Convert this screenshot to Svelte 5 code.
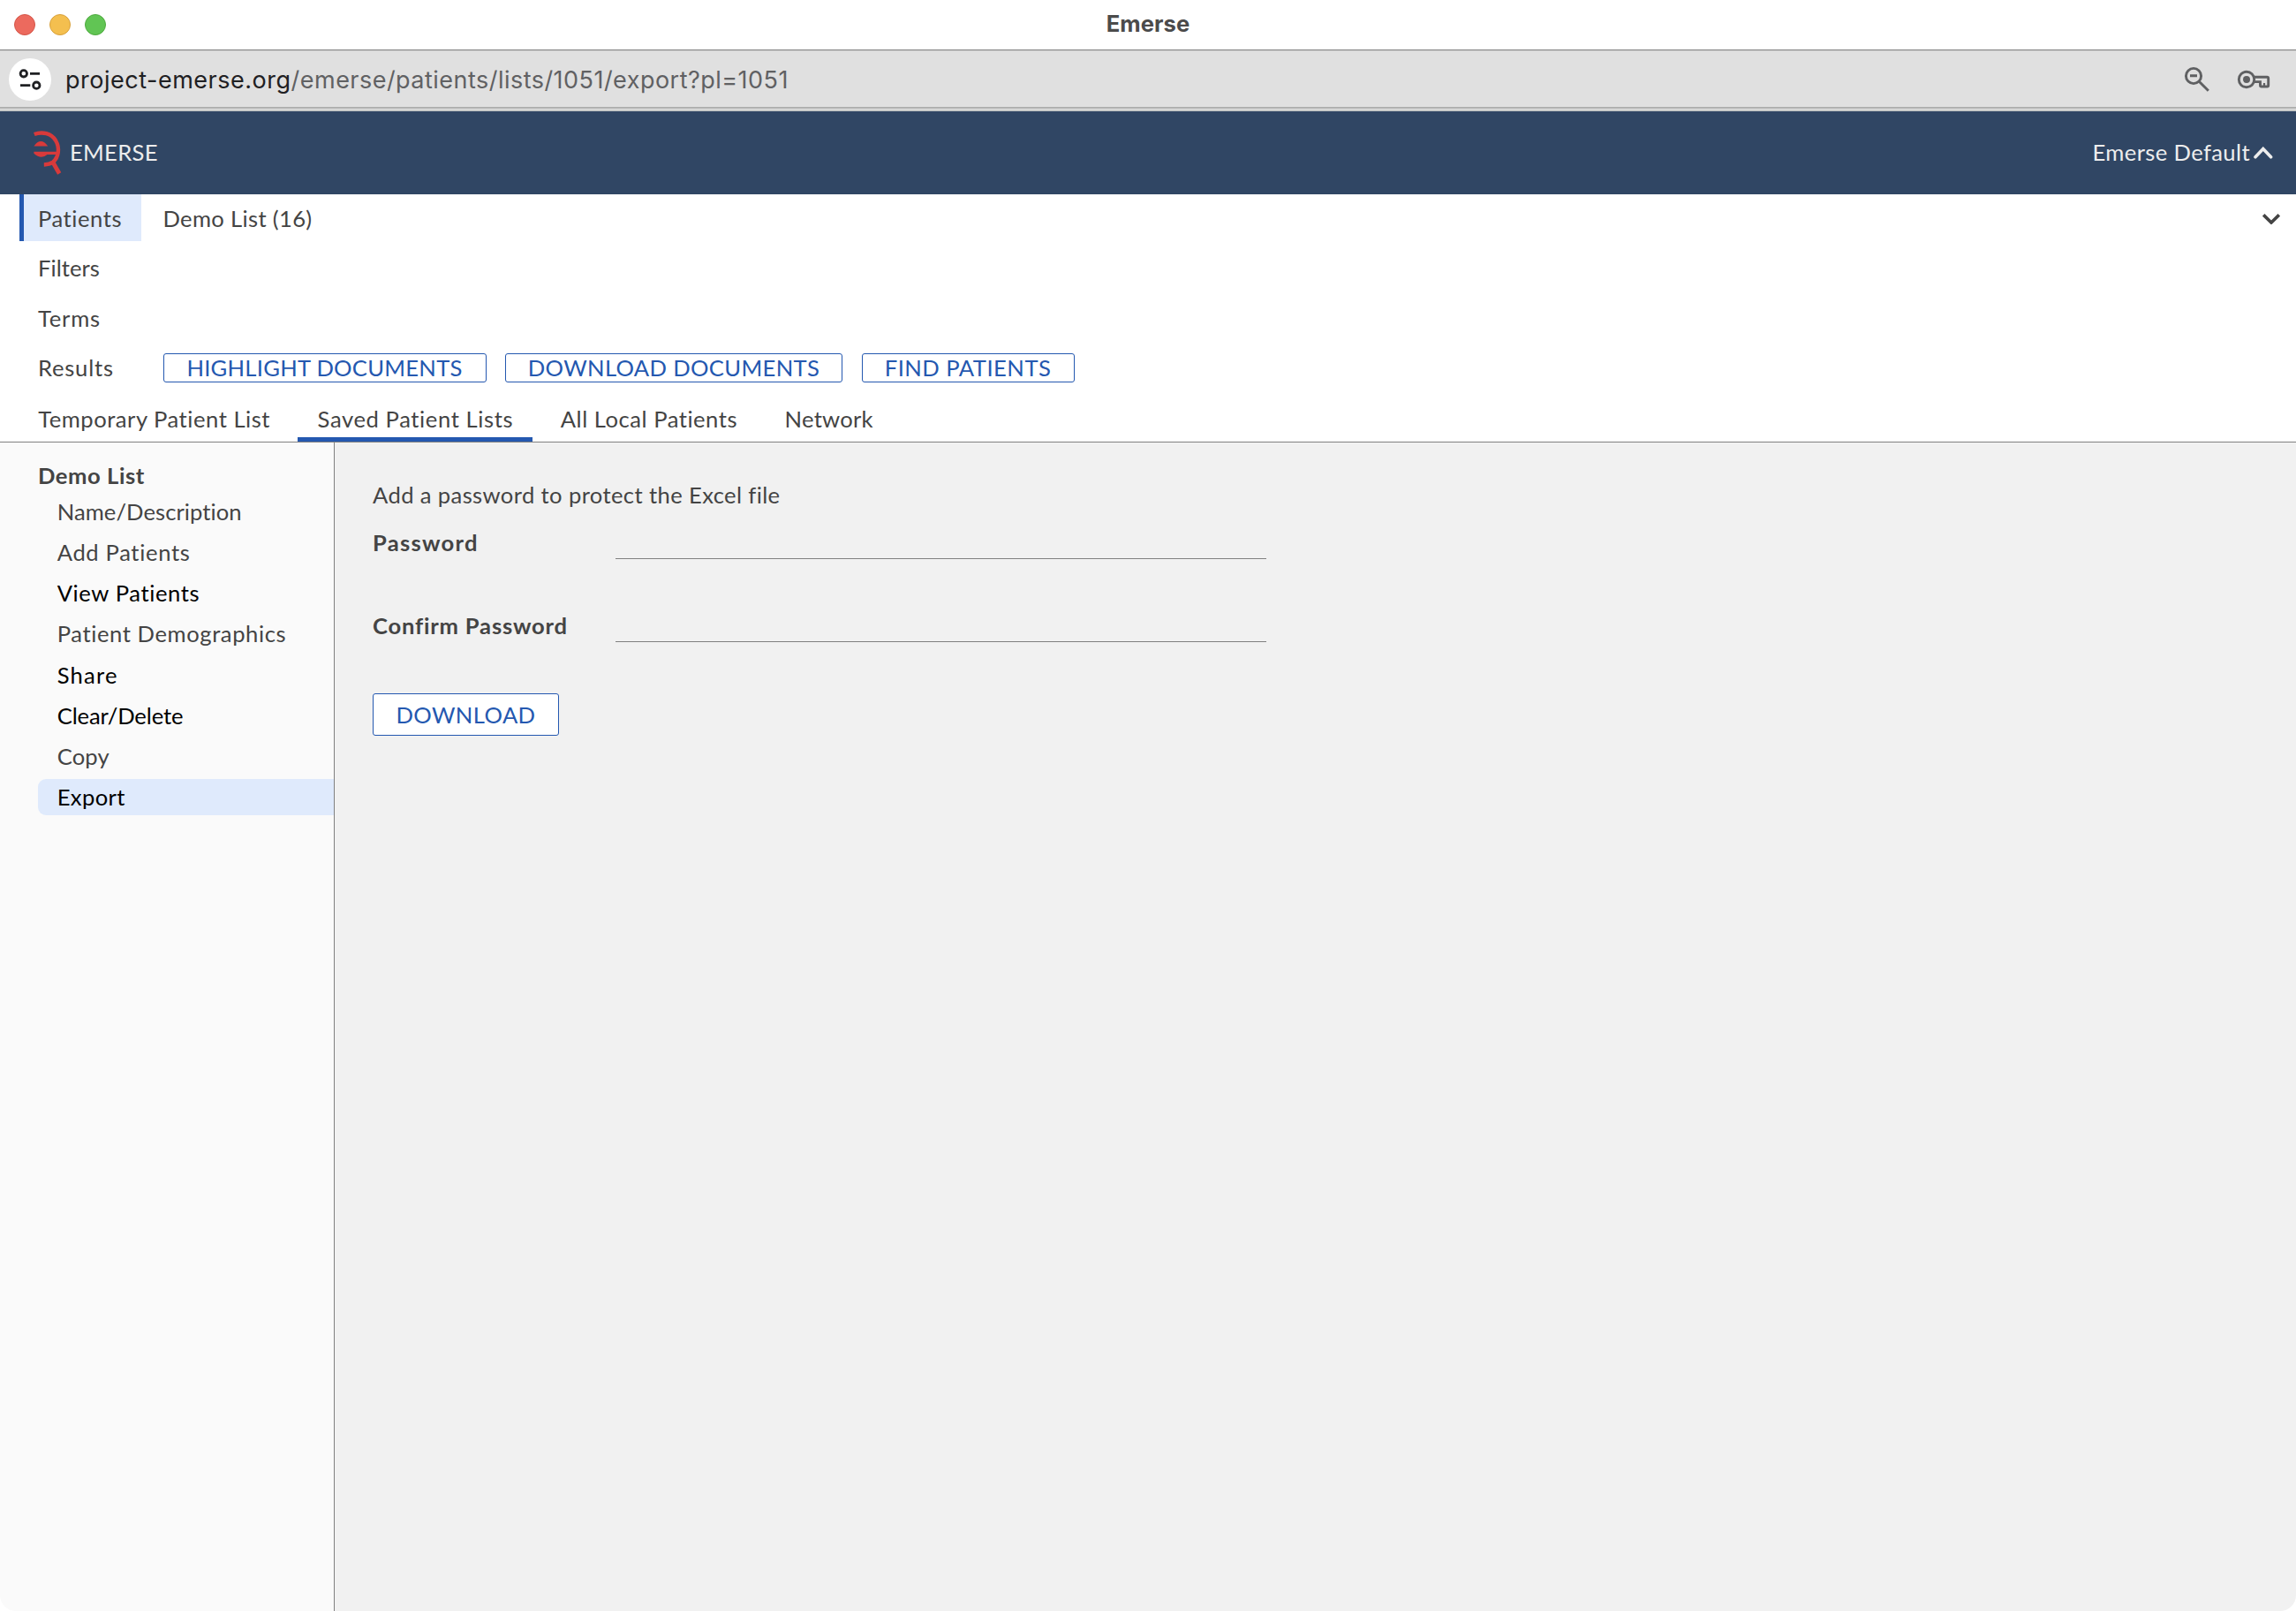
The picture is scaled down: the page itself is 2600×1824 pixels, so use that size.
<script lang="ts">
	type Label = { text: string; ls: number };

	const url = { host: 'project-emerse.org', path: '/emerse/patients/lists/1051/export?pl=1051' };

	// ls = letter-spacing in px
	const actions: (Label & { width: number })[] = [
		{ text: 'HIGHLIGHT DOCUMENTS', ls: 0.26, width: 366 },
		{ text: 'DOWNLOAD DOCUMENTS', ls: 0.34, width: 382 },
		{ text: 'FIND PATIENTS', ls: 0.48, width: 241 },
	];

	const tabs: Label[] = [
		{ text: 'Temporary Patient List', ls: 0.52 },
		{ text: 'Saved Patient Lists', ls: 0.6 },
		{ text: 'All Local Patients', ls: 0.52 },
		{ text: 'Network', ls: 0.25 },
	];
	let activeTab = $state('Saved Patient Lists');

	const menu: (Label & { strong?: boolean })[] = [
		{ text: 'Name/Description', ls: 0.07 },
		{ text: 'Add Patients', ls: 0.65 },
		{ text: 'View Patients', ls: 0.6, strong: true },
		{ text: 'Patient Demographics', ls: 0.59 },
		{ text: 'Share', ls: 1.2, strong: true },
		{ text: 'Clear/Delete', ls: -0.12, strong: true },
		{ text: 'Copy', ls: 0.11 },
		{ text: 'Export', ls: 0.38, strong: true },
	];
	let activeMenu = $state('Export');
</script>

<div class="window">
	<div class="titlebar">
		<div class="lights">
			<span class="light red"></span>
			<span class="light yellow"></span>
			<span class="light green"></span>
		</div>
		<span class="title">Emerse</span>
	</div>

	<div class="urlbar">
		<span class="site-info">
			<svg width="48" height="48" viewBox="0 0 48 48" fill="none" stroke="#1f2023" stroke-width="2.8">
				<circle cx="16.8" cy="17.3" r="3.7" />
				<path d="M24 17.3h11M13 30.7h11.3" />
				<circle cx="31.3" cy="30.7" r="3.7" />
			</svg>
		</span>
		<span class="url"><span class="host">{url.host}</span>{url.path}</span>
		<svg class="zoom-icon" width="30" height="30" viewBox="0 0 30 30" fill="none" stroke="#5f6062" stroke-width="2.9">
			<circle cx="11" cy="11" r="8.6" />
			<path d="M7 10.8h8M17 17l10.8 10.8" />
		</svg>
		<svg width="38" height="22" viewBox="0 0 38 22" fill="none" stroke="#5f6062" stroke-width="2.9">
			<path d="M19 8.2h15.2q1.5 0 1.5 1.5v8q0 1.3-1.3 1.3h-6.6q-1.3 0-1.3-1.3V13.6H19" />
			<path d="M31 15v4" stroke-width="2.2" />
			<circle cx="11" cy="11" r="8.7" />
			<circle cx="11" cy="11" r="4" fill="#5f6062" stroke="none" />
		</svg>
	</div>
	<div class="urlbar-edge"></div>

	<header>
		<svg class="logo" width="32" height="52" viewBox="0 0 32 52">
			<g fill="none" stroke="#d83a3b" stroke-width="4.4">
				<path d="M.8 5C10 1.5 20 4 25 12C30 20.5 28.5 31 22 36.5Q18 39.3 11.8 39.5" />
				<path d="M21.5 36L29.2 49.5" stroke-width="4.8" />
			</g>
			<g fill="#d83a3b">
				<path d="M.4 18.4Q8.2 7.8 16.2 18.4Z" />
				<path d="M.4 24.7H27V27.9H15.5Q8.5 34 .4 26.8Z" />
			</g>
		</svg>
		<span class="brand">EMERSE</span>
		<span class="account">Emerse Default</span>
		<svg width="22" height="14" viewBox="0 0 22 14" fill="none" stroke="#ededed" stroke-width="3.6" stroke-linecap="round">
			<path d="M2 11.8L10.8 2.5L19.6 11.8" />
		</svg>
	</header>

	<nav class="query">
		<div class="query-row">
			<span class="step active ls-wide">Patients</span>
			<span class="summary">Demo List (16)</span>
			<svg class="expand" width="20" height="12" viewBox="0 0 20 12" fill="none" stroke="#444" stroke-width="3.6">
				<path d="M1.2 1.3L10 10L18.8 1.3" />
			</svg>
		</div>
		<div class="query-row"><span class="step ls-tight">Filters</span></div>
		<div class="query-row"><span class="step ls-wider low">Terms</span></div>
		<div class="query-row">
			<span class="step ls-wider">Results</span>
			<div class="actions">
				{#each actions as a}
					<button class="btn" style="width: {a.width}px; letter-spacing: {a.ls}px">{a.text}</button>
				{/each}
			</div>
		</div>
	</nav>

	<div class="tabs">
		{#each tabs as t}
			<button
				class="tab"
				class:active={t.text === activeTab}
				style="letter-spacing: {t.ls}px"
				onclick={() => (activeTab = t.text)}
			>{t.text}</button>
		{/each}
	</div>

	<div class="body">
		<aside>
			<h2>Demo List</h2>
			<ul>
				{#each menu as m}
					<li class:strong={m.strong} class:active={m.text === activeMenu}>
						<button style="letter-spacing: {m.ls}px" onclick={() => (activeMenu = m.text)}>{m.text}</button>
					</li>
				{/each}
			</ul>
		</aside>

		<main>
			<p>Add a password to protect the Excel file</p>
			<div class="field">
				<label class="pw" for="password">Password</label>
				<input id="password" type="password" />
			</div>
			<div class="field">
				<label for="confirm">Confirm Password</label>
				<input id="confirm" type="password" />
			</div>
			<button class="btn btn-large">DOWNLOAD</button>
		</main>
	</div>
</div>

<style>
	:global(body) { background: #fff; }

	.window {
		width: 2600px;
		height: 1824px;
		display: flex;
		flex-direction: column;
		overflow: hidden;
		border-radius: 0 0 18px 18px;
		background: #fff;
		color: #444;
		font-family: Lato, 'Open Sans', sans-serif;
		font-size: 25.6px;
		letter-spacing: 0.38px;
		white-space: nowrap;
	}

	.window, .window * { box-sizing: border-box; }

	button {
		font: inherit;
		color: inherit;
		background: none;
		border: 0;
		padding: 0;
		text-align: left;
	}

	/* Browser chrome */
	.titlebar {
		display: grid;
		grid-template-columns: 1fr auto 1fr;
		align-items: center;
		height: 56px;
		padding: 0 16px;
	}

	.lights { display: flex; gap: 16px; }
	.light { width: 24px; height: 24px; border-radius: 50%; border: 1px solid; }
	.red { background: #ec6a5e; border-color: #d45548; }
	.yellow { background: #f4bf4f; border-color: #d8a13c; }
	.green { background: #61c554; border-color: #4eaa3f; }

	.title {
		font-family: Inter, sans-serif;
		font-weight: 700;
		letter-spacing: 0.08px;
		color: #4b4b4b;
		padding-bottom: 3px;
	}

	.urlbar {
		display: flex;
		align-items: center;
		height: 65px;
		padding: 1px 29px 0 10px;
		border-top: 1px solid #868686;
		box-shadow: inset 0 1px #cfcfcf;
		background: #e0e0e0;
	}

	.site-info {
		width: 48px;
		height: 48px;
		margin-right: 16px;
		border-radius: 50%;
		background: #fff;
	}

	.site-info svg { display: block; }

	.url {
		flex: 1;
		font-family: Inter, sans-serif;
		font-size: 27px;
		letter-spacing: 0.47px;
		line-height: 34px;
		padding-top: 2px;
		color: #606163;
	}

	.host { color: #1f2023; letter-spacing: 0.51px; }
	.zoom-icon { margin-right: 30px; }

	.urlbar-edge {
		height: 5px;
		border-top: 2px solid #b0b1b0;
		border-bottom: 2px solid #c8cac9;
		background: #e2e2e2;
	}

	/* App header */
	header {
		display: flex;
		align-items: center;
		height: 94px;
		padding: 0 26px 0 38px;
		background: #304664;
		color: #ededed;
	}

	.brand { flex: 1; margin-left: 9px; padding-bottom: 2px; letter-spacing: 0.29px; }
	.account { margin-right: 4px; padding-bottom: 2px; }

	/* Query summary */
	.query {
		display: flex;
		flex-direction: column;
		gap: 3.5px;
	}

	.query-row {
		display: flex;
		align-items: center;
		height: 53px;
		padding: 0 18px 0 22px;
	}

	.step {
		width: 138px;
		height: 53px;
		line-height: 53px;
		margin-right: 24.5px;
		padding-left: 16px;
		border-left: 5px solid transparent;
	}

	.step.active { background: #dfeafc; border-color: #2458b0; line-height: 54px; }
	.low { line-height: 55px; }
	.ls-tight { letter-spacing: 0.05px; }
	.ls-wide { letter-spacing: 0.55px; }
	.ls-wider { letter-spacing: 0.77px; }
	.summary { flex: 1; letter-spacing: 0.33px; }
	.expand { margin-top: 2px; }

	.actions { display: flex; gap: 21.5px; }

	.btn {
		height: 33px;
		border: 1px solid #2458b0;
		border-radius: 3px;
		background: #fff;
		color: #2458b0;
		line-height: 31px;
		text-align: center;
	}

	/* Tabs */
	.tabs {
		display: flex;
		align-items: flex-end;
		gap: 9.4px;
		flex: 1 0 58.5px;
		max-height: 58.5px;
		padding-left: 21px;
		border-bottom: 1px solid #808080;
	}

	.tab {
		height: 47px;
		padding: 0 22px 0 22.2px;
		line-height: 42px;
		border-bottom: 5px solid transparent;
	}

	.tab.active { border-color: #2458b0; }

	/* Body */
	.body { display: flex; flex: 1; }

	aside {
		width: 379px;
		padding: 17px 0 0 43px;
		border-right: 1px solid #808080;
		background: #fafafa;
	}

	h2 {
		margin: 0;
		font-size: inherit;
		font-weight: 700;
		letter-spacing: 0.55px;
		line-height: 41px;
	}

	ul {
		display: flex;
		flex-direction: column;
		gap: 5.14px;
		margin: 0;
		padding: 0;
		list-style: none;
	}

	li {
		height: 41px;
		padding-left: 21.7px;
		line-height: 41px;
		border-radius: 9px 0 0 9px;
	}

	li button { display: block; }
	.strong { color: #000; }
	li.active { background: #dfeafc; }

	main {
		flex: 1;
		padding: 41px 43px;
		background: #f1f1f1;
	}

	p { margin: 0 0 17px; line-height: 37px; }

	.field { display: flex; margin-bottom: 57px; }

	label {
		width: 275px;
		font-weight: 700;
		letter-spacing: 0.8px;
		line-height: 37px;
	}

	.pw { letter-spacing: 1.25px; }

	input {
		width: 737px;
		height: 37px;
		padding: 0;
		border: 0;
		border-bottom: 1px solid #808080;
		background: transparent;
		font: inherit;
		outline: none;
	}

	.btn-large {
		width: 211px;
		height: 48px;
		margin-top: 1px;
		line-height: 46px;
		letter-spacing: 0.4px;
	}
</style>
